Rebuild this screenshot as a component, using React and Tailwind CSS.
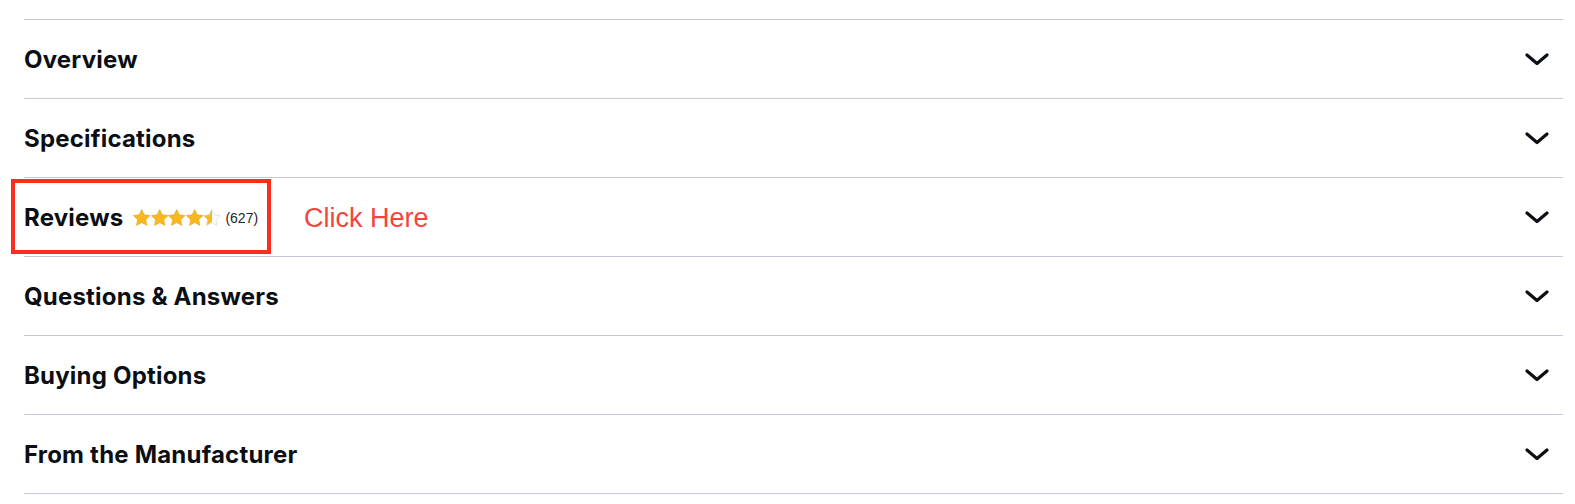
import { useState } from "react"

const sections = ["Overview", "Specifications", "Reviews", "Questions & Answers", "Buying Options", "From the Manufacturer"]

function Star({ fill, id }) {
  // fill: 1 full, 0.5 half
  return (
    <svg width="17.4" height="17.4" viewBox="0 0 24 24" className="shrink-0">
      <defs>
        <linearGradient id={id}>
          <stop offset={fill === 1 ? "100%" : "50%"} stopColor="#f8b820" />
          <stop offset={fill === 1 ? "100%" : "50%"} stopColor="#ffffff" />
        </linearGradient>
      </defs>
      <path
        d="M12 0.8l3.5 7.3 8 1-5.9 5.6 1.5 7.9L12 18.7l-7.1 3.9 1.5-7.9L0.5 9.1l8-1z"
        fill={`url(#${id})`}
        stroke={fill === 1 ? "#eaa70f" : "#d2d2d2"}
        strokeWidth="0.9"
        strokeLinejoin="round"
      />
    </svg>
  )
}

function Chevron() {
  return (
    <svg width="24" height="13" viewBox="0 0 24 13" fill="none">
      <path d="M2 2l10 8.5L22 2" stroke="#0b0f14" strokeWidth="3.2" strokeLinecap="round" strokeLinejoin="round" />
    </svg>
  )
}

function App() {
  const [open, setOpen] = useState(null)

  return (
    <div className="bg-white w-[1575px] h-[504px] pt-[19px] pl-6 pr-3 overflow-hidden" style={{ fontFamily: "Inter, 'Liberation Sans', sans-serif" }}>
      <div className="border-b border-[#c5cad6]">
        {sections.map((title) => (
          <div
            key={title}
            onClick={() => setOpen(open === title ? null : title)}
            className="relative h-[79px] border-t border-[#c5cad6] flex items-center justify-between cursor-pointer"
          >
            <div className="flex items-center pt-[2px]">
              <span className="text-[24px] font-bold text-[#0b0f14] tracking-[0.2px]">{title}</span>
              {title === "Reviews" && (
                <>
                  <div className="flex items-center ml-[10px]">
                    <Star fill={1} id="s1" />
                    <Star fill={1} id="s2" />
                    <Star fill={1} id="s3" />
                    <Star fill={1} id="s4" />
                    <Star fill={0.5} id="s5" />
                  </div>
                  <span className="ml-[5px] text-[14px] text-[#1d252c]" style={{ fontFamily: "'Liberation Sans', Arial, sans-serif" }}>(627)</span>
                  <span className="ml-[46px] text-[27px] text-[#f2453d]" style={{ fontFamily: "'Liberation Sans', Arial, sans-serif" }}>Click Here</span>
                  <div className="absolute left-[-13px] top-[1px] w-[260px] h-[75px] border-[4px] border-[#fa2d1f] pointer-events-none"></div>
                </>
              )}
            </div>
            <div className="pr-[14px]">
              <Chevron />
            </div>
          </div>
        ))}
      </div>
    </div>
  )
}

export default App
